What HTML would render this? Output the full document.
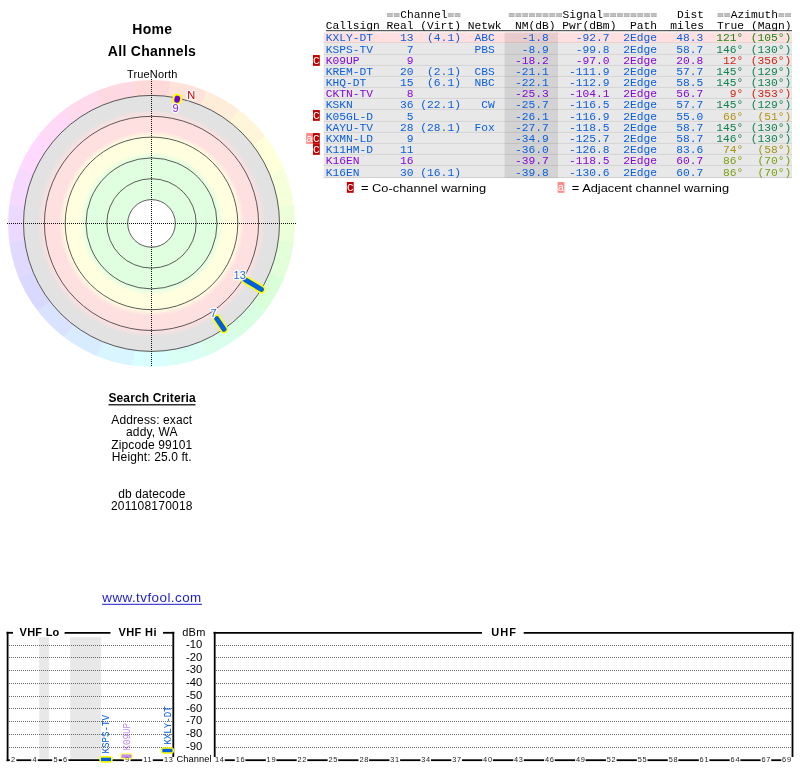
<!DOCTYPE html>
<html><head><meta charset="utf-8"><title>TV Fool</title>
<style>
html,body{margin:0;padding:0;background:#fff;}
body{width:800px;height:768px;position:relative;overflow:hidden;font-family:"Liberation Sans",sans-serif;}
#hue{position:absolute;left:8.1px;top:79.5px;width:287.0px;height:287.0px;border-radius:50%;background:conic-gradient(from 0deg,rgb(255,217,217) 0.00deg 7.50deg,rgb(255,226,217) 7.50deg 22.50deg,rgb(255,236,217) 22.50deg 37.50deg,rgb(255,245,217) 37.50deg 52.50deg,rgb(255,255,217) 52.50deg 67.50deg,rgb(245,255,217) 67.50deg 82.50deg,rgb(236,255,217) 82.50deg 97.50deg,rgb(226,255,217) 97.50deg 112.50deg,rgb(217,255,217) 112.50deg 127.50deg,rgb(217,255,226) 127.50deg 142.50deg,rgb(217,255,236) 142.50deg 157.50deg,rgb(217,255,245) 157.50deg 172.50deg,rgb(217,255,255) 172.50deg 187.50deg,rgb(217,245,255) 187.50deg 202.50deg,rgb(217,236,255) 202.50deg 217.50deg,rgb(217,226,255) 217.50deg 232.50deg,rgb(217,217,255) 232.50deg 247.50deg,rgb(226,217,255) 247.50deg 262.50deg,rgb(236,217,255) 262.50deg 277.50deg,rgb(245,217,255) 277.50deg 292.50deg,rgb(255,217,255) 292.50deg 307.50deg,rgb(255,217,245) 307.50deg 322.50deg,rgb(255,217,236) 322.50deg 337.50deg,rgb(255,217,226) 337.50deg 352.50deg,rgb(255,217,217) 352.50deg 360.00deg);}
svg{position:absolute;left:0;top:0;will-change:transform;filter:blur(0.3px);}
.m{font-family:"Liberation Mono",monospace;font-size:11.28px;letter-spacing:0px;white-space:pre;}
.s{font-family:"Liberation Sans",sans-serif;}
</style></head><body>
<div id="hue"></div>
<svg width="800" height="768" viewBox="0 0 800 768">
<defs><radialGradient id="zg" cx="151.5" cy="223.4" r="128.0" gradientUnits="userSpaceOnUse"><stop offset="0.0000" stop-color="#fff"/><stop offset="0.1852" stop-color="#fff"/><stop offset="0.1852" stop-color="#e0ffe0"/><stop offset="0.5117" stop-color="#e0ffe0"/><stop offset="0.5625" stop-color="#ffffe0"/><stop offset="0.6719" stop-color="#ffffe0"/><stop offset="0.7227" stop-color="#ffe0e0"/><stop offset="0.8359" stop-color="#ffe0e0"/><stop offset="0.8906" stop-color="#e2e2e2"/><stop offset="1.0000" stop-color="#e2e2e2"/></radialGradient></defs>
<circle cx="151.5" cy="223.4" r="128.0" fill="url(#zg)"/>
<circle cx="151.5" cy="223.4" r="23.8" fill="none" stroke="#333" stroke-width="0.8"/>
<circle cx="151.5" cy="223.4" r="44.7" fill="none" stroke="#333" stroke-width="0.8"/>
<circle cx="151.5" cy="223.4" r="65.5" fill="none" stroke="#333" stroke-width="0.8"/>
<circle cx="151.5" cy="223.4" r="86.3" fill="none" stroke="#333" stroke-width="0.8"/>
<circle cx="151.5" cy="223.4" r="107.1" fill="none" stroke="#333" stroke-width="0.8"/>
<circle cx="151.5" cy="223.4" r="128.0" fill="none" stroke="#333" stroke-width="0.8"/>
<line x1="7" y1="223.5" x2="296" y2="223.5" stroke="#111" stroke-width="1" stroke-dasharray="1 1"/>
<line x1="151.5" y1="79" x2="151.5" y2="367" stroke="#111" stroke-width="1" stroke-dasharray="1 1"/>
<line x1="244.93" y1="279.54" x2="261.39" y2="289.43" stroke="#ffff00" stroke-width="8.4" stroke-linecap="round"/><line x1="244.93" y1="279.54" x2="261.39" y2="289.43" stroke="#0060e0" stroke-width="5.0" stroke-linecap="round"/>
<line x1="216.75" y1="318.70" x2="223.99" y2="329.26" stroke="#ffff00" stroke-width="8.4" stroke-linecap="round"/><line x1="216.75" y1="318.70" x2="223.99" y2="329.26" stroke="#0060e0" stroke-width="5.0" stroke-linecap="round"/>
<line x1="177.05" y1="100.02" x2="177.38" y2="98.45" stroke="#ffff00" stroke-width="9.8" stroke-linecap="round"/><line x1="177.05" y1="100.02" x2="177.38" y2="98.45" stroke="#7000e0" stroke-width="5.6" stroke-linecap="round"/>
<text x="233.6" y="278.8" class="s" font-size="11" font-weight="normal" text-anchor="start" fill="#2070e0" stroke="#fff" stroke-width="2.6" stroke-linejoin="round" paint-order="stroke" stroke-opacity="0.85">13</text>
<text x="210.4" y="316.9" class="s" font-size="11" font-weight="normal" text-anchor="start" fill="#2070e0" stroke="#fff" stroke-width="2.6" stroke-linejoin="round" paint-order="stroke" stroke-opacity="0.85">7</text>
<text x="172.5" y="112.0" class="s" font-size="11" font-weight="normal" text-anchor="start" fill="#7a20e0" stroke="#fff" stroke-width="2.6" stroke-linejoin="round" paint-order="stroke" stroke-opacity="0.85">9</text>
<text x="187.3" y="98.8" class="s" font-size="11" font-weight="normal" text-anchor="start" fill="#c80000" stroke="#fff" stroke-width="2.6" stroke-linejoin="round" paint-order="stroke" stroke-opacity="0.85">N</text>
<text x="152.4" y="34.0" class="s" font-size="14" font-weight="bold" text-anchor="middle" fill="#000" letter-spacing="0.3">Home</text>
<text x="152.0" y="55.5" class="s" font-size="14" font-weight="bold" text-anchor="middle" fill="#000" letter-spacing="0.3">All Channels</text>
<text x="152.3" y="77.8" class="s" font-size="11" font-weight="normal" text-anchor="middle" fill="#000" letter-spacing="0.15">TrueNorth</text>
<text x="152.1" y="401.6" class="s" font-size="12" font-weight="bold" text-anchor="middle" fill="#000" letter-spacing="0.13">Search Criteria</text>
<rect x="108.5" y="404.2" width="87" height="1.2" fill="#000"/>
<text x="151.8" y="423.5" class="s" font-size="12" font-weight="normal" text-anchor="middle" fill="#000" letter-spacing="0.12">Address: exact</text>
<text x="151.9" y="436.4" class="s" font-size="12" font-weight="normal" text-anchor="middle" fill="#000" letter-spacing="0.12">addy, WA</text>
<text x="151.8" y="448.6" class="s" font-size="12" font-weight="normal" text-anchor="middle" fill="#000" letter-spacing="0.12">Zipcode 99101</text>
<text x="151.8" y="460.8" class="s" font-size="12" font-weight="normal" text-anchor="middle" fill="#000" letter-spacing="0.12">Height: 25.0 ft.</text>
<text x="151.9" y="498.0" class="s" font-size="12" font-weight="normal" text-anchor="middle" fill="#000" letter-spacing="0.12">db datecode</text>
<text x="151.8" y="509.6" class="s" font-size="12" font-weight="normal" text-anchor="middle" fill="#000" letter-spacing="0.22">201108170018</text>
<text x="152.0" y="601.5" class="s" font-size="13.4" font-weight="normal" text-anchor="middle" fill="#1c1cc8" letter-spacing="0.45">www.tvfool.com</text>
<rect x="102" y="603.8" width="100" height="1" fill="#1c1cc8"/>
<rect x="323.7" y="32.40" width="468.3" height="10.50" fill="#ffe0e0"/><rect x="323.7" y="41.95" width="468.3" height="0.85" fill="#e2bcbc"/><rect x="323.7" y="42.80" width="468.3" height="0.45" fill="#fff0f0"/>
<rect x="323.7" y="42.85" width="468.3" height="12.05" fill="#e8e8e8"/><rect x="323.7" y="53.95" width="468.3" height="0.85" fill="#c4c4c4"/><rect x="323.7" y="54.80" width="468.3" height="0.45" fill="#efefef"/>
<rect x="323.7" y="54.85" width="468.3" height="11.05" fill="#e8e8e8"/><rect x="323.7" y="64.95" width="468.3" height="0.85" fill="#c4c4c4"/><rect x="323.7" y="65.80" width="468.3" height="0.45" fill="#efefef"/>
<rect x="323.7" y="65.85" width="468.3" height="11.05" fill="#e8e8e8"/><rect x="323.7" y="75.95" width="468.3" height="0.85" fill="#c4c4c4"/><rect x="323.7" y="76.80" width="468.3" height="0.45" fill="#efefef"/>
<rect x="323.7" y="76.85" width="468.3" height="11.05" fill="#e8e8e8"/><rect x="323.7" y="86.95" width="468.3" height="0.85" fill="#c4c4c4"/><rect x="323.7" y="87.80" width="468.3" height="0.45" fill="#efefef"/>
<rect x="323.7" y="87.85" width="468.3" height="11.05" fill="#e8e8e8"/><rect x="323.7" y="97.95" width="468.3" height="0.85" fill="#c4c4c4"/><rect x="323.7" y="98.80" width="468.3" height="0.45" fill="#efefef"/>
<rect x="323.7" y="98.85" width="468.3" height="11.05" fill="#e8e8e8"/><rect x="323.7" y="108.95" width="468.3" height="0.85" fill="#c4c4c4"/><rect x="323.7" y="109.80" width="468.3" height="0.45" fill="#efefef"/>
<rect x="323.7" y="109.85" width="468.3" height="12.05" fill="#e8e8e8"/><rect x="323.7" y="120.95" width="468.3" height="0.85" fill="#c4c4c4"/><rect x="323.7" y="121.80" width="468.3" height="0.45" fill="#efefef"/>
<rect x="323.7" y="121.85" width="468.3" height="11.05" fill="#e8e8e8"/><rect x="323.7" y="131.95" width="468.3" height="0.85" fill="#c4c4c4"/><rect x="323.7" y="132.80" width="468.3" height="0.45" fill="#efefef"/>
<rect x="323.7" y="132.85" width="468.3" height="11.05" fill="#e8e8e8"/><rect x="323.7" y="142.95" width="468.3" height="0.85" fill="#c4c4c4"/><rect x="323.7" y="143.80" width="468.3" height="0.45" fill="#efefef"/>
<rect x="323.7" y="143.85" width="468.3" height="11.05" fill="#e8e8e8"/><rect x="323.7" y="153.95" width="468.3" height="0.85" fill="#c4c4c4"/><rect x="323.7" y="154.80" width="468.3" height="0.45" fill="#efefef"/>
<rect x="323.7" y="154.85" width="468.3" height="11.05" fill="#e8e8e8"/><rect x="323.7" y="164.95" width="468.3" height="0.85" fill="#c4c4c4"/><rect x="323.7" y="165.80" width="468.3" height="0.45" fill="#efefef"/>
<rect x="323.7" y="165.85" width="468.3" height="12.05" fill="#e8e8e8"/><rect x="323.7" y="176.95" width="468.3" height="0.85" fill="#c4c4c4"/><rect x="323.7" y="177.80" width="468.3" height="0.45" fill="#efefef"/>
<rect x="504.5" y="32.40" width="53.5" height="145.45" fill="#000" fill-opacity="0.09"/>
<rect x="386.94" y="13.25" width="5.9" height="1.45" fill="#a2a2a2"/><rect x="386.94" y="15.35" width="5.9" height="1.45" fill="#a2a2a2"/><rect x="393.71" y="13.25" width="5.9" height="1.45" fill="#a2a2a2"/><rect x="393.71" y="15.35" width="5.9" height="1.45" fill="#a2a2a2"/><text x="400.13" y="17.60" class="m" fill="#000"  xml:space="preserve">Channel</text><rect x="447.84" y="13.25" width="5.9" height="1.45" fill="#a2a2a2"/><rect x="447.84" y="15.35" width="5.9" height="1.45" fill="#a2a2a2"/><rect x="454.60" y="13.25" width="5.9" height="1.45" fill="#a2a2a2"/><rect x="454.60" y="15.35" width="5.9" height="1.45" fill="#a2a2a2"/><rect x="508.73" y="13.25" width="5.9" height="1.45" fill="#a2a2a2"/><rect x="508.73" y="15.35" width="5.9" height="1.45" fill="#a2a2a2"/><rect x="515.50" y="13.25" width="5.9" height="1.45" fill="#a2a2a2"/><rect x="515.50" y="15.35" width="5.9" height="1.45" fill="#a2a2a2"/><rect x="522.26" y="13.25" width="5.9" height="1.45" fill="#a2a2a2"/><rect x="522.26" y="15.35" width="5.9" height="1.45" fill="#a2a2a2"/><rect x="529.03" y="13.25" width="5.9" height="1.45" fill="#a2a2a2"/><rect x="529.03" y="15.35" width="5.9" height="1.45" fill="#a2a2a2"/><rect x="535.80" y="13.25" width="5.9" height="1.45" fill="#a2a2a2"/><rect x="535.80" y="15.35" width="5.9" height="1.45" fill="#a2a2a2"/><rect x="542.56" y="13.25" width="5.9" height="1.45" fill="#a2a2a2"/><rect x="542.56" y="15.35" width="5.9" height="1.45" fill="#a2a2a2"/><rect x="549.33" y="13.25" width="5.9" height="1.45" fill="#a2a2a2"/><rect x="549.33" y="15.35" width="5.9" height="1.45" fill="#a2a2a2"/><rect x="556.09" y="13.25" width="5.9" height="1.45" fill="#a2a2a2"/><rect x="556.09" y="15.35" width="5.9" height="1.45" fill="#a2a2a2"/><text x="562.51" y="17.60" class="m" fill="#000"  xml:space="preserve">Signal</text><rect x="603.46" y="13.25" width="5.9" height="1.45" fill="#a2a2a2"/><rect x="603.46" y="15.35" width="5.9" height="1.45" fill="#a2a2a2"/><rect x="610.22" y="13.25" width="5.9" height="1.45" fill="#a2a2a2"/><rect x="610.22" y="15.35" width="5.9" height="1.45" fill="#a2a2a2"/><rect x="616.99" y="13.25" width="5.9" height="1.45" fill="#a2a2a2"/><rect x="616.99" y="15.35" width="5.9" height="1.45" fill="#a2a2a2"/><rect x="623.75" y="13.25" width="5.9" height="1.45" fill="#a2a2a2"/><rect x="623.75" y="15.35" width="5.9" height="1.45" fill="#a2a2a2"/><rect x="630.52" y="13.25" width="5.9" height="1.45" fill="#a2a2a2"/><rect x="630.52" y="15.35" width="5.9" height="1.45" fill="#a2a2a2"/><rect x="637.29" y="13.25" width="5.9" height="1.45" fill="#a2a2a2"/><rect x="637.29" y="15.35" width="5.9" height="1.45" fill="#a2a2a2"/><rect x="644.05" y="13.25" width="5.9" height="1.45" fill="#a2a2a2"/><rect x="644.05" y="15.35" width="5.9" height="1.45" fill="#a2a2a2"/><rect x="650.82" y="13.25" width="5.9" height="1.45" fill="#a2a2a2"/><rect x="650.82" y="15.35" width="5.9" height="1.45" fill="#a2a2a2"/><text x="677.03" y="17.60" class="m" fill="#000"  xml:space="preserve">Dist</text><rect x="717.48" y="13.25" width="5.9" height="1.45" fill="#a2a2a2"/><rect x="717.48" y="15.35" width="5.9" height="1.45" fill="#a2a2a2"/><rect x="724.24" y="13.25" width="5.9" height="1.45" fill="#a2a2a2"/><rect x="724.24" y="15.35" width="5.9" height="1.45" fill="#a2a2a2"/><text x="730.66" y="17.60" class="m" fill="#000"  xml:space="preserve">Azimuth</text><rect x="778.37" y="13.25" width="5.9" height="1.45" fill="#a2a2a2"/><rect x="778.37" y="15.35" width="5.9" height="1.45" fill="#a2a2a2"/><rect x="785.14" y="13.25" width="5.9" height="1.45" fill="#a2a2a2"/><rect x="785.14" y="15.35" width="5.9" height="1.45" fill="#a2a2a2"/>
<text x="325.70" y="28.50" class="m" fill="#000"  xml:space="preserve">Callsign Real (Virt) Netwk  NM(dB) Pwr(dBm)  Path</text><text x="670.27" y="28.50" class="m" fill="#000"  xml:space="preserve">miles</text><text x="717.03" y="28.50" class="m" fill="#000"  xml:space="preserve">True</text><text x="751.06" y="28.50" class="m" fill="#000"  xml:space="preserve">(Magn)</text><rect x="326" y="30.2" width="466" height="1" fill="#333"/>
<text x="325.70" y="41.00" class="m" fill="#0a5ee0"  xml:space="preserve">KXLY-DT    13  (4.1)  ABC    -1.8    -92.7  2Edge</text><text x="676.33" y="41.00" class="m" fill="#0a5ee0"  xml:space="preserve">48.3</text><text x="716.23" y="41.00" class="m" fill="#128a14"  xml:space="preserve">121°</text><text x="750.76" y="41.00" class="m" fill="#128a14"  xml:space="preserve">(105°)</text>
<text x="325.70" y="53.00" class="m" fill="#0a5ee0"  xml:space="preserve">KSPS-TV     7         PBS    -8.9    -99.8  2Edge</text><text x="676.33" y="53.00" class="m" fill="#0a5ee0"  xml:space="preserve">58.7</text><text x="716.23" y="53.00" class="m" fill="#0f8054"  xml:space="preserve">146°</text><text x="750.76" y="53.00" class="m" fill="#0f8054"  xml:space="preserve">(130°)</text>
<text x="325.70" y="64.00" class="m" fill="#8208d8"  xml:space="preserve">K09UP       9               -18.2    -97.0  2Edge</text><text x="676.33" y="64.00" class="m" fill="#8208d8"  xml:space="preserve">20.8</text><text x="722.99" y="64.00" class="m" fill="#d02412"  xml:space="preserve">12°</text><text x="750.76" y="64.00" class="m" fill="#d02412"  xml:space="preserve">(356°)</text>
<rect x="313" y="55.05" width="6.8" height="10.8" fill="#c00000"/><text x="316.4" y="63.85" class="m" font-size="10.5" text-anchor="middle" fill="#fff">C</text>
<text x="325.70" y="75.00" class="m" fill="#0a5ee0"  xml:space="preserve">KREM-DT    20  (2.1)  CBS   -21.1   -111.9  2Edge</text><text x="676.33" y="75.00" class="m" fill="#0a5ee0"  xml:space="preserve">57.7</text><text x="716.23" y="75.00" class="m" fill="#108050"  xml:space="preserve">145°</text><text x="750.76" y="75.00" class="m" fill="#108050"  xml:space="preserve">(129°)</text>
<text x="325.70" y="86.00" class="m" fill="#0a5ee0"  xml:space="preserve">KHQ-DT     15  (6.1)  NBC   -22.1   -112.9  2Edge</text><text x="676.33" y="86.00" class="m" fill="#0a5ee0"  xml:space="preserve">58.5</text><text x="716.23" y="86.00" class="m" fill="#108050"  xml:space="preserve">145°</text><text x="750.76" y="86.00" class="m" fill="#108050"  xml:space="preserve">(130°)</text>
<text x="325.70" y="97.00" class="m" fill="#8208d8"  xml:space="preserve">CKTN-TV     8               -25.3   -104.1  2Edge</text><text x="676.33" y="97.00" class="m" fill="#8208d8"  xml:space="preserve">56.7</text><text x="729.76" y="97.00" class="m" fill="#d22010"  xml:space="preserve">9°</text><text x="750.76" y="97.00" class="m" fill="#d22010"  xml:space="preserve">(353°)</text>
<text x="325.70" y="108.00" class="m" fill="#0a5ee0"  xml:space="preserve">KSKN       36 (22.1)   CW   -25.7   -116.5  2Edge</text><text x="676.33" y="108.00" class="m" fill="#0a5ee0"  xml:space="preserve">57.7</text><text x="716.23" y="108.00" class="m" fill="#108050"  xml:space="preserve">145°</text><text x="750.76" y="108.00" class="m" fill="#108050"  xml:space="preserve">(129°)</text>
<text x="325.70" y="120.00" class="m" fill="#0a5ee0"  xml:space="preserve">K05GL-D     5               -26.1   -116.9  2Edge</text><text x="676.33" y="120.00" class="m" fill="#0a5ee0"  xml:space="preserve">55.0</text><text x="722.99" y="120.00" class="m" fill="#b09212"  xml:space="preserve">66°</text><text x="757.52" y="120.00" class="m" fill="#b09212"  xml:space="preserve">(51°)</text>
<rect x="313" y="110.05" width="6.8" height="10.8" fill="#c00000"/><text x="316.4" y="118.85" class="m" font-size="10.5" text-anchor="middle" fill="#fff">C</text>
<text x="325.70" y="131.00" class="m" fill="#0a5ee0"  xml:space="preserve">KAYU-TV    28 (28.1)  Fox   -27.7   -118.5  2Edge</text><text x="676.33" y="131.00" class="m" fill="#0a5ee0"  xml:space="preserve">58.7</text><text x="716.23" y="131.00" class="m" fill="#108050"  xml:space="preserve">145°</text><text x="750.76" y="131.00" class="m" fill="#108050"  xml:space="preserve">(130°)</text>
<text x="325.70" y="142.00" class="m" fill="#0a5ee0"  xml:space="preserve">KXMN-LD     9               -34.9   -125.7  2Edge</text><text x="676.33" y="142.00" class="m" fill="#0a5ee0"  xml:space="preserve">58.7</text><text x="716.23" y="142.00" class="m" fill="#0f8054"  xml:space="preserve">146°</text><text x="750.76" y="142.00" class="m" fill="#0f8054"  xml:space="preserve">(130°)</text>
<rect x="313" y="133.05" width="6.8" height="10.8" fill="#c00000"/><text x="316.4" y="141.85" class="m" font-size="10.5" text-anchor="middle" fill="#fff">C</text>
<rect x="306.2" y="133.05" width="6.8" height="10.8" fill="#ff8a8a"/><text x="309.6" y="141.85" class="m" font-size="10.5" text-anchor="middle" fill="#fff">a</text>
<text x="325.70" y="153.00" class="m" fill="#0a5ee0"  xml:space="preserve">K11HM-D    11               -36.0   -126.8  2Edge</text><text x="676.33" y="153.00" class="m" fill="#0a5ee0"  xml:space="preserve">83.6</text><text x="722.99" y="153.00" class="m" fill="#a29412"  xml:space="preserve">74°</text><text x="757.52" y="153.00" class="m" fill="#a29412"  xml:space="preserve">(58°)</text>
<rect x="313" y="144.05" width="6.8" height="10.8" fill="#c00000"/><text x="316.4" y="152.85" class="m" font-size="10.5" text-anchor="middle" fill="#fff">C</text>
<text x="325.70" y="164.00" class="m" fill="#8208d8"  xml:space="preserve">K16EN      16               -39.7   -118.5  2Edge</text><text x="676.33" y="164.00" class="m" fill="#8208d8"  xml:space="preserve">60.7</text><text x="722.99" y="164.00" class="m" fill="#7aa012"  xml:space="preserve">86°</text><text x="757.52" y="164.00" class="m" fill="#7aa012"  xml:space="preserve">(70°)</text>
<text x="325.70" y="176.00" class="m" fill="#0a5ee0"  xml:space="preserve">K16EN      30 (16.1)        -39.8   -130.6  2Edge</text><text x="676.33" y="176.00" class="m" fill="#0a5ee0"  xml:space="preserve">60.7</text><text x="722.99" y="176.00" class="m" fill="#7aa012"  xml:space="preserve">86°</text><text x="757.52" y="176.00" class="m" fill="#7aa012"  xml:space="preserve">(70°)</text>
<rect x="346.9" y="182" width="6.8" height="10.8" fill="#c00000"/><text x="350.3" y="190.8" class="m" font-size="10.5" text-anchor="middle" fill="#fff">C</text>
<text transform="translate(361.0 191.8) scale(1.168 1)" class="s" font-size="11" fill="#000">= Co-channel warning</text>
<rect x="557.6" y="182" width="6.8" height="10.8" fill="#ff8a8a"/><text x="561" y="190.8" class="m" font-size="10.5" text-anchor="middle" fill="#fff">a</text>
<text transform="translate(571.8 191.8) scale(1.168 1)" class="s" font-size="11" fill="#000">= Adjacent channel warning</text>
<rect x="39.2" y="637.2" width="9.9" height="121.6" fill="#e8e8e8"/><rect x="70.2" y="637.2" width="30.9" height="121.6" fill="#e8e8e8"/>
<line x1="9" y1="645.5" x2="173" y2="645.5" stroke="#6a6a6a" stroke-width="1" stroke-dasharray="1 1" shape-rendering="crispEdges"/><line x1="216" y1="645.5" x2="792" y2="645.5" stroke="#6a6a6a" stroke-width="1" stroke-dasharray="1 1" shape-rendering="crispEdges"/>
<text transform="translate(202.3 648) scale(1.13 1)" class="s" font-size="10" text-anchor="end" fill="#000">-10</text>
<line x1="9" y1="657.5" x2="173" y2="657.5" stroke="#6a6a6a" stroke-width="1" stroke-dasharray="1 1" shape-rendering="crispEdges"/><line x1="216" y1="657.5" x2="792" y2="657.5" stroke="#6a6a6a" stroke-width="1" stroke-dasharray="1 1" shape-rendering="crispEdges"/>
<text transform="translate(202.3 661) scale(1.13 1)" class="s" font-size="10" text-anchor="end" fill="#000">-20</text>
<line x1="9" y1="670.5" x2="173" y2="670.5" stroke="#6a6a6a" stroke-width="1" stroke-dasharray="1 1" shape-rendering="crispEdges"/><line x1="216" y1="670.5" x2="792" y2="670.5" stroke="#6a6a6a" stroke-width="1" stroke-dasharray="1 1" shape-rendering="crispEdges"/>
<text transform="translate(202.3 673) scale(1.13 1)" class="s" font-size="10" text-anchor="end" fill="#000">-30</text>
<line x1="9" y1="683.5" x2="173" y2="683.5" stroke="#6a6a6a" stroke-width="1" stroke-dasharray="1 1" shape-rendering="crispEdges"/><line x1="216" y1="683.5" x2="792" y2="683.5" stroke="#6a6a6a" stroke-width="1" stroke-dasharray="1 1" shape-rendering="crispEdges"/>
<text transform="translate(202.3 686) scale(1.13 1)" class="s" font-size="10" text-anchor="end" fill="#000">-40</text>
<line x1="9" y1="696.5" x2="173" y2="696.5" stroke="#6a6a6a" stroke-width="1" stroke-dasharray="1 1" shape-rendering="crispEdges"/><line x1="216" y1="696.5" x2="792" y2="696.5" stroke="#6a6a6a" stroke-width="1" stroke-dasharray="1 1" shape-rendering="crispEdges"/>
<text transform="translate(202.3 699) scale(1.13 1)" class="s" font-size="10" text-anchor="end" fill="#000">-50</text>
<line x1="9" y1="708.5" x2="173" y2="708.5" stroke="#6a6a6a" stroke-width="1" stroke-dasharray="1 1" shape-rendering="crispEdges"/><line x1="216" y1="708.5" x2="792" y2="708.5" stroke="#6a6a6a" stroke-width="1" stroke-dasharray="1 1" shape-rendering="crispEdges"/>
<text transform="translate(202.3 712) scale(1.13 1)" class="s" font-size="10" text-anchor="end" fill="#000">-60</text>
<line x1="9" y1="721.5" x2="173" y2="721.5" stroke="#6a6a6a" stroke-width="1" stroke-dasharray="1 1" shape-rendering="crispEdges"/><line x1="216" y1="721.5" x2="792" y2="721.5" stroke="#6a6a6a" stroke-width="1" stroke-dasharray="1 1" shape-rendering="crispEdges"/>
<text transform="translate(202.3 724) scale(1.13 1)" class="s" font-size="10" text-anchor="end" fill="#000">-70</text>
<line x1="9" y1="734.5" x2="173" y2="734.5" stroke="#6a6a6a" stroke-width="1" stroke-dasharray="1 1" shape-rendering="crispEdges"/><line x1="216" y1="734.5" x2="792" y2="734.5" stroke="#6a6a6a" stroke-width="1" stroke-dasharray="1 1" shape-rendering="crispEdges"/>
<text transform="translate(202.3 737) scale(1.13 1)" class="s" font-size="10" text-anchor="end" fill="#000">-80</text>
<line x1="9" y1="747.5" x2="173" y2="747.5" stroke="#6a6a6a" stroke-width="1" stroke-dasharray="1 1" shape-rendering="crispEdges"/><line x1="216" y1="747.5" x2="792" y2="747.5" stroke="#6a6a6a" stroke-width="1" stroke-dasharray="1 1" shape-rendering="crispEdges"/>
<text transform="translate(202.3 750) scale(1.13 1)" class="s" font-size="10" text-anchor="end" fill="#000">-90</text>
<text x="193.9" y="635.7" class="s" font-size="11" font-weight="normal" text-anchor="middle" fill="#000" letter-spacing="0.2">dBm</text>
<text x="194.1" y="761.6" class="s" font-size="9.3" font-weight="normal" text-anchor="middle" fill="#000" letter-spacing="0.1">Channel</text>
<line x1="7.6" y1="631.8" x2="7.6" y2="761.2" stroke="#000" stroke-width="1.8"/><line x1="173.3" y1="631.8" x2="173.3" y2="757.0" stroke="#000" stroke-width="1.8"/><line x1="6.6" y1="632.8" x2="13.0" y2="632.8" stroke="#000" stroke-width="1.8"/><line x1="64.6" y1="632.8" x2="110.5" y2="632.8" stroke="#000" stroke-width="1.8"/><line x1="163.0" y1="632.8" x2="174.3" y2="632.8" stroke="#000" stroke-width="1.8"/><text x="39.6" y="635.9" class="s" font-size="11" font-weight="bold" text-anchor="middle" fill="#000" letter-spacing="0.25">VHF Lo</text>
<text x="137.7" y="635.9" class="s" font-size="11" font-weight="bold" text-anchor="middle" fill="#000" letter-spacing="0.4">VHF Hi</text>
<line x1="214.7" y1="631.8" x2="214.7" y2="757.0" stroke="#000" stroke-width="1.8"/><line x1="792.5" y1="631.8" x2="792.5" y2="757.0" stroke="#000" stroke-width="1.8"/><line x1="213.5" y1="632.8" x2="482.0" y2="632.8" stroke="#000" stroke-width="1.8"/><line x1="523.7" y1="632.8" x2="793.5" y2="632.8" stroke="#000" stroke-width="1.8"/><text x="504.1" y="635.9" class="s" font-size="11" font-weight="bold" text-anchor="middle" fill="#000" letter-spacing="1.1">UHF</text>

<text x="13.4" y="761.7" class="s" font-size="7.4" text-anchor="middle" fill="#222" letter-spacing="0.7">2</text><text x="34.9" y="761.7" class="s" font-size="7.4" text-anchor="middle" fill="#222" letter-spacing="0.7">4</text><text x="55.9" y="761.7" class="s" font-size="7.4" text-anchor="middle" fill="#222" letter-spacing="0.7">5</text><text x="65.5" y="761.7" class="s" font-size="7.4" text-anchor="middle" fill="#222" letter-spacing="0.7">6</text><text x="106.3" y="761.7" class="s" font-size="7.4" text-anchor="middle" fill="#222" letter-spacing="0.7">7</text><text x="127.5" y="761.7" class="s" font-size="7.4" text-anchor="middle" fill="#222" letter-spacing="0.7">9</text><text x="147.8" y="761.7" class="s" font-size="7.4" text-anchor="middle" fill="#222" letter-spacing="0.7">11</text><text x="168.8" y="761.7" class="s" font-size="7.4" text-anchor="middle" fill="#222" letter-spacing="0.7">13</text><line x1="6.6" y1="760.2" x2="9.8" y2="760.2" stroke="#000" stroke-width="1.8"/><line x1="16.4" y1="760.2" x2="31.2" y2="760.2" stroke="#000" stroke-width="1.8"/><line x1="37.8" y1="760.2" x2="52.2" y2="760.2" stroke="#000" stroke-width="1.8"/><line x1="58.8" y1="760.2" x2="61.9" y2="760.2" stroke="#000" stroke-width="1.8"/><line x1="68.5" y1="760.2" x2="102.7" y2="760.2" stroke="#000" stroke-width="1.8"/><line x1="109.3" y1="760.2" x2="123.9" y2="760.2" stroke="#000" stroke-width="1.8"/><line x1="130.5" y1="760.2" x2="142.2" y2="760.2" stroke="#000" stroke-width="1.8"/><line x1="152.8" y1="760.2" x2="163.1" y2="760.2" stroke="#000" stroke-width="1.8"/>
<text x="219.8" y="761.7" class="s" font-size="7.4" text-anchor="middle" fill="#222" letter-spacing="0.7">14</text><text x="240.5" y="761.7" class="s" font-size="7.4" text-anchor="middle" fill="#222" letter-spacing="0.7">16</text><text x="271.4" y="761.7" class="s" font-size="7.4" text-anchor="middle" fill="#222" letter-spacing="0.7">19</text><text x="302.3" y="761.7" class="s" font-size="7.4" text-anchor="middle" fill="#222" letter-spacing="0.7">22</text><text x="333.3" y="761.7" class="s" font-size="7.4" text-anchor="middle" fill="#222" letter-spacing="0.7">25</text><text x="364.2" y="761.7" class="s" font-size="7.4" text-anchor="middle" fill="#222" letter-spacing="0.7">28</text><text x="395.1" y="761.7" class="s" font-size="7.4" text-anchor="middle" fill="#222" letter-spacing="0.7">31</text><text x="426.1" y="761.7" class="s" font-size="7.4" text-anchor="middle" fill="#222" letter-spacing="0.7">34</text><text x="457.0" y="761.7" class="s" font-size="7.4" text-anchor="middle" fill="#222" letter-spacing="0.7">37</text><text x="487.9" y="761.7" class="s" font-size="7.4" text-anchor="middle" fill="#222" letter-spacing="0.7">40</text><text x="518.8" y="761.7" class="s" font-size="7.4" text-anchor="middle" fill="#222" letter-spacing="0.7">43</text><text x="549.8" y="761.7" class="s" font-size="7.4" text-anchor="middle" fill="#222" letter-spacing="0.7">46</text><text x="580.7" y="761.7" class="s" font-size="7.4" text-anchor="middle" fill="#222" letter-spacing="0.7">49</text><text x="611.6" y="761.7" class="s" font-size="7.4" text-anchor="middle" fill="#222" letter-spacing="0.7">52</text><text x="642.6" y="761.7" class="s" font-size="7.4" text-anchor="middle" fill="#222" letter-spacing="0.7">55</text><text x="673.5" y="761.7" class="s" font-size="7.4" text-anchor="middle" fill="#222" letter-spacing="0.7">58</text><text x="704.4" y="761.7" class="s" font-size="7.4" text-anchor="middle" fill="#222" letter-spacing="0.7">61</text><text x="735.4" y="761.7" class="s" font-size="7.4" text-anchor="middle" fill="#222" letter-spacing="0.7">64</text><text x="766.3" y="761.7" class="s" font-size="7.4" text-anchor="middle" fill="#222" letter-spacing="0.7">67</text><text x="786.9" y="761.7" class="s" font-size="7.4" text-anchor="middle" fill="#222" letter-spacing="0.7">69</text><line x1="224.8" y1="760.2" x2="234.8" y2="760.2" stroke="#000" stroke-width="1.8"/><line x1="245.4" y1="760.2" x2="265.8" y2="760.2" stroke="#000" stroke-width="1.8"/><line x1="276.4" y1="760.2" x2="296.7" y2="760.2" stroke="#000" stroke-width="1.8"/><line x1="307.3" y1="760.2" x2="327.6" y2="760.2" stroke="#000" stroke-width="1.8"/><line x1="338.2" y1="760.2" x2="358.5" y2="760.2" stroke="#000" stroke-width="1.8"/><line x1="369.1" y1="760.2" x2="389.5" y2="760.2" stroke="#000" stroke-width="1.8"/><line x1="400.1" y1="760.2" x2="420.4" y2="760.2" stroke="#000" stroke-width="1.8"/><line x1="431.0" y1="760.2" x2="451.3" y2="760.2" stroke="#000" stroke-width="1.8"/><line x1="461.9" y1="760.2" x2="482.3" y2="760.2" stroke="#000" stroke-width="1.8"/><line x1="492.9" y1="760.2" x2="513.2" y2="760.2" stroke="#000" stroke-width="1.8"/><line x1="523.8" y1="760.2" x2="544.1" y2="760.2" stroke="#000" stroke-width="1.8"/><line x1="554.7" y1="760.2" x2="575.1" y2="760.2" stroke="#000" stroke-width="1.8"/><line x1="585.6" y1="760.2" x2="606.0" y2="760.2" stroke="#000" stroke-width="1.8"/><line x1="616.6" y1="760.2" x2="636.9" y2="760.2" stroke="#000" stroke-width="1.8"/><line x1="647.5" y1="760.2" x2="667.8" y2="760.2" stroke="#000" stroke-width="1.8"/><line x1="678.4" y1="760.2" x2="698.8" y2="760.2" stroke="#000" stroke-width="1.8"/><line x1="709.4" y1="760.2" x2="729.7" y2="760.2" stroke="#000" stroke-width="1.8"/><line x1="740.3" y1="760.2" x2="760.6" y2="760.2" stroke="#000" stroke-width="1.8"/><line x1="771.2" y1="760.2" x2="781.3" y2="760.2" stroke="#000" stroke-width="1.8"/>
<g opacity="1.00"><line x1="102.6" y1="759.4" x2="109.4" y2="759.4" stroke="#ffff00" stroke-width="6.6" stroke-linecap="round"/><line x1="101.0" y1="759.4" x2="111.0" y2="759.4" stroke="#0060e0" stroke-width="3.4" stroke-linecap="butt"/></g>
<text transform="translate(109.2 753.6) rotate(-90) scale(0.815 1)" class="m" fill="#0a5ee0" opacity="1.00">KSPS-TV</text>
<g opacity="0.55"><line x1="123.1" y1="756.2" x2="129.9" y2="756.2" stroke="#ffff00" stroke-width="6.6" stroke-linecap="round"/><line x1="121.5" y1="756.2" x2="131.5" y2="756.2" stroke="#8a30e0" stroke-width="3.4" stroke-linecap="butt"/></g>
<text transform="translate(130.0 750.4) rotate(-90) scale(0.815 1)" class="m" fill="#8a30e0" opacity="0.55">K09UP</text>
<g opacity="1.00"><line x1="164.0" y1="750.5" x2="170.8" y2="750.5" stroke="#ffff00" stroke-width="6.6" stroke-linecap="round"/><line x1="162.4" y1="750.5" x2="172.4" y2="750.5" stroke="#0060e0" stroke-width="3.4" stroke-linecap="butt"/></g>
<text transform="translate(171.4 744.8) rotate(-90) scale(0.815 1)" class="m" fill="#0a5ee0" opacity="1.00">KXLY-DT</text>
</svg>
</body></html>
